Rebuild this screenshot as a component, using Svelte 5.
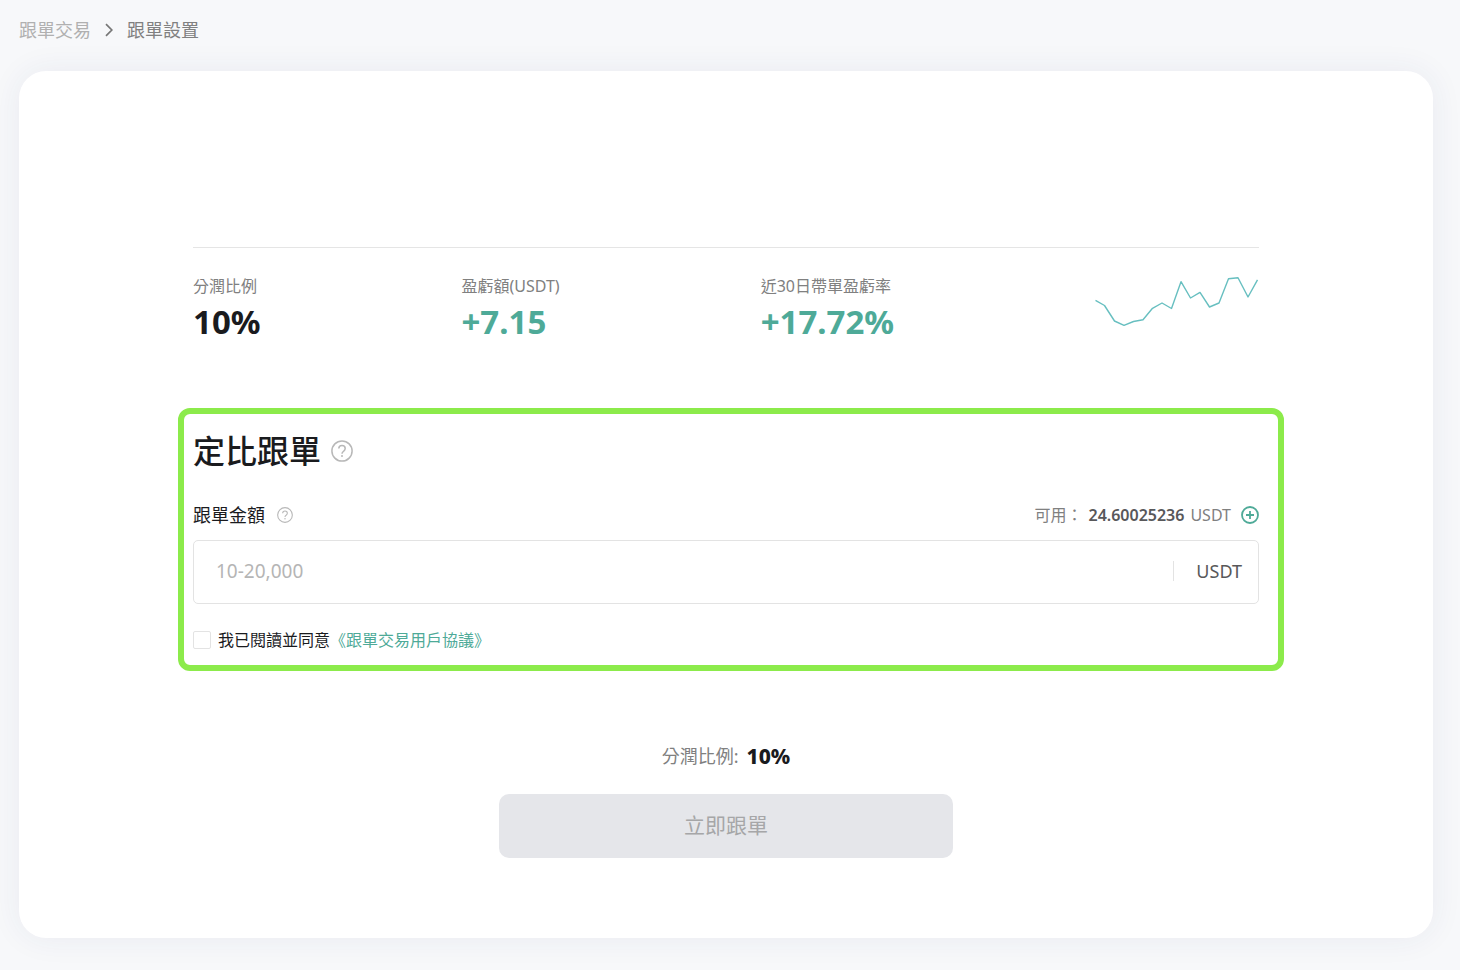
<script>
    let amount = "";
    let agreed = false;

    const profitShare = "10%";
    const available = "24.60025236";
    const coin = "USDT";

    const stats = [
        { label: "分潤比例", value: profitShare, up: false },
        { label: "盈虧額(USDT)", value: "+7.15", up: true },
        { label: "近30日帶單盈虧率", value: "+17.72%", up: true },
    ];

    // Return curve of the last 30 days, as x,y pairs
    const curve = [
        [0.5, 24.3],
        [9.5, 29.5],
        [19.5, 45],
        [29, 49.3],
        [38.5, 45.5],
        [48, 43.8],
        [57.5, 32.3],
        [67, 27],
        [76.5, 32.5],
        [86, 5.7],
        [95.5, 22],
        [105, 16.4],
        [114.5, 31],
        [124, 27],
        [133.5, 2.8],
        [143, 1.7],
        [153, 21],
        [162.5, 3.8],
    ];
    const points = curve.map((p) => p.join(",")).join(" ");
</script>

{#snippet helpIcon()}
    <svg viewBox="0 0 22 22" fill="none" stroke="currentColor">
        <circle cx="11" cy="11" r="10.1" stroke-width="1.5" />
        <path
            d="M7.8 8.6C7.8 6.7 9.1 5.5 11 5.5s3.2 1.2 3.2 3c0 1.4-.8 2.1-1.7 2.8-.9.6-1.5 1.2-1.5 2.5"
            stroke-width="1.5"
        />
        <circle cx="11" cy="16.1" r="1" fill="currentColor" stroke="none" />
    </svg>
{/snippet}

<nav class="breadcrumb">
    <a href="#copy-trading">跟單交易</a>
    <svg class="arrow" viewBox="0 0 8 14" fill="none">
        <path d="M1 1.2 6.8 7 1 12.8" stroke="#777" stroke-width="1.7" />
    </svg>
    <span>跟單設置</span>
</nav>

<main class="card">
    <div class="content">
        <section class="stats">
            {#each stats as stat}
                <div class="stat">
                    <div class="stat-label">{stat.label}</div>
                    <div class="stat-value" class:up={stat.up}>{stat.value}</div>
                </div>
            {/each}
            <svg class="chart" viewBox="0 0 164 52" fill="none">
                <polyline {points} stroke="#67bfc0" stroke-width="1.4" stroke-linejoin="round" />
            </svg>
        </section>

        <section class="settings">
            <div class="title-row">
                <h1>定比跟單</h1>
                <button class="help large" aria-label="定比跟單">{@render helpIcon()}</button>
            </div>

            <div class="amount-row">
                <label for="amount">跟單金額</label>
                <button class="help" aria-label="跟單金額">{@render helpIcon()}</button>
                <div class="balance">
                    <span>可用：</span>
                    <b>{available}</b>
                    <span>{coin}</span>
                    <button class="add" aria-label="USDT">
                        <svg viewBox="0 0 18 18" fill="none" stroke="currentColor" stroke-width="1.8">
                            <circle cx="9" cy="9" r="8" />
                            <path d="M9 5v8M5 9h8" />
                        </svg>
                    </button>
                </div>
            </div>

            <div class="amount-box">
                <input id="amount" type="text" placeholder="10-20,000" bind:value={amount} />
                <span class="unit">{coin}</span>
            </div>

            <div class="agreement">
                <input id="agree" type="checkbox" bind:checked={agreed} />
                <label for="agree">我已閱讀並同意</label>
                <a href="#agreement">《跟單交易用戶協議》</a>
            </div>
        </section>

        <div class="share">
            <span>分潤比例:</span>
            <b>{profitShare}</b>
        </div>
        <button class="submit" disabled={!agreed || !amount}>立即跟單</button>
    </div>
</main>

<style>
    :global(body) {
        background: #f7f8fa;
        color: #1a1b1e;
        font-family: "Noto Sans", "Noto Sans CJK TC", sans-serif;
        font-size: 16px;
        line-height: 24px;
    }

    a {
        text-decoration: none;
    }

    button,
    input {
        font-family: inherit;
    }

    svg {
        display: block;
    }

    .breadcrumb {
        display: flex;
        align-items: center;
        gap: 14px;
        padding: 18px 19px 0;
        font-size: 18px;
        color: #808080;
    }

    .breadcrumb a {
        color: #b0b0b0;
    }

    .arrow {
        width: 8px;
        height: 14px;
    }

    .card {
        margin: 29px 27px 32px 19px;
        padding: 176px 24px 80px;
        background: #fff;
        border-radius: 27px;
        box-shadow: 0 0 32px rgba(40, 50, 110, 0.07);
    }

    .content {
        display: flex;
        flex-direction: column;
        max-width: 1066px;
        margin: 0 auto;
    }

    .stats {
        display: flex;
        justify-content: space-between;
        padding-top: 26px;
        border-top: 1px solid #e5e5e5;
    }

    .stat-label {
        color: #808080;
    }

    .stat-value {
        margin-top: 4px;
        font-size: 33px;
        font-weight: 700;
        line-height: 40px;
    }

    .up {
        color: #4eaa98;
    }

    .chart {
        width: 164px;
        height: 52px;
        margin-top: 2px;
    }

    .settings {
        margin: 66px -25px 0 -15px;
        padding: 17px 19px 13px 9px;
        border: 6px solid #8ceb4b;
        border-radius: 12px;
    }

    .title-row {
        display: flex;
        align-items: center;
        gap: 10px;
    }

    h1 {
        margin: 0;
        font-size: 32px;
        font-weight: 500;
        line-height: 40px;
    }

    .help,
    .add {
        padding: 0;
        border: none;
        background: none;
        cursor: pointer;
    }

    .help {
        width: 16px;
        color: #b8b8b8;
    }

    .help.large {
        width: 22px;
    }

    .amount-row {
        display: flex;
        align-items: center;
        gap: 12px;
        margin-top: 32px;
        font-size: 18px;
    }

    .balance {
        display: flex;
        align-items: center;
        gap: 6px;
        margin-left: auto;
        font-size: 16px;
        color: #808080;
    }

    .balance b {
        font-weight: 600;
        color: #58585a;
    }

    .add {
        width: 18px;
        margin-left: 4px;
        color: #4eaa98;
    }

    .amount-box {
        display: flex;
        align-items: center;
        box-sizing: border-box;
        height: 64px;
        margin-top: 13px;
        padding: 0 16px 2px 22px;
        border: 1px solid #e3e3e3;
        border-radius: 5px;
    }

    .amount-box input {
        flex: 1;
        min-width: 0;
        padding: 0;
        border: none;
        outline: none;
        background: none;
        font-size: 19px;
    }

    .amount-box input::placeholder {
        color: #b5b5b5;
    }

    .unit {
        padding-left: 22px;
        border-left: 1px solid #e3e3e3;
        font-size: 18px;
        line-height: 20px;
        color: #58585a;
    }

    .agreement {
        display: flex;
        align-items: center;
        margin-top: 24px;
    }

    .agreement input {
        appearance: none;
        width: 18px;
        height: 18px;
        margin: 0 7px 0 0;
        border: 1px solid #e3e3e3;
        border-radius: 2px;
    }

    .agreement input:checked {
        background: #4eaa98;
        border-color: #4eaa98;
    }

    .agreement a {
        color: #4eaa98;
    }

    .share {
        display: flex;
        align-items: center;
        justify-content: center;
        gap: 8px;
        margin-top: 71px;
        font-size: 18px;
        line-height: 28px;
        color: #808080;
    }

    .share b {
        font-size: 21px;
        font-weight: 800;
        color: #1a1b1e;
    }

    .submit {
        align-self: center;
        width: 454px;
        max-width: 100%;
        height: 64px;
        margin-top: 24px;
        padding-bottom: 5px;
        border: none;
        border-radius: 10px;
        background: #4eaa98;
        font-size: 21px;
        color: #fff;
        cursor: pointer;
    }

    .submit:disabled {
        background: #e5e6ea;
        color: #a6a6a8;
        cursor: default;
    }
</style>
